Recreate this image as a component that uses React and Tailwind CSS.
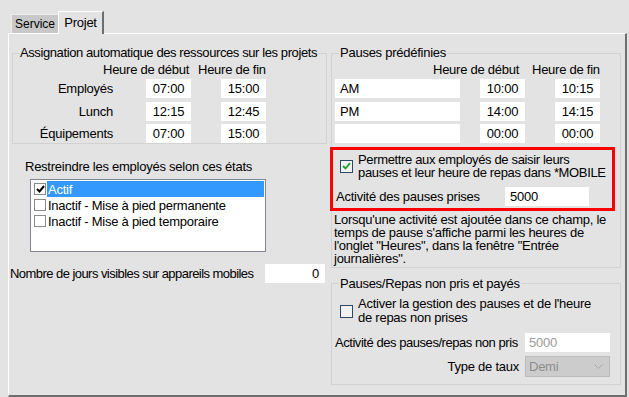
import React from 'react'

function TimeBox({ value, w = 'w-[45px]', className = '' }) {
  return (
    <div className={`${w} h-[19px] bg-white flex items-center justify-center ${className}`}>{value}</div>
  )
}

function Check({ on, className = '' }) {
  return (
    <div className={`w-[12px] h-[12px] border border-[#8a8a8a] bg-white flex items-center justify-center shrink-0 ${className}`}>
      {on && (
        <svg width="9" height="8" viewBox="0 0 9 8">
          <path d="M1 4 L3.5 6.5 L8 1" stroke="#000" strokeWidth="2" fill="none" />
        </svg>
      )}
    </div>
  )
}

function WinCheck({ on }) {
  return (
    <div className="w-[13px] h-[13px] border border-[#2b4866] bg-[#f2f2f2] flex items-center justify-center shrink-0">
      {on && (
        <svg width="9" height="8" viewBox="0 0 9 8">
          <path d="M1 4 L3.5 6.5 L8 1.2" stroke="#1f9d2b" strokeWidth="1.8" fill="none" />
        </svg>
      )}
    </div>
  )
}

export default function App(){
  const states = [
    { label: 'Actif', on: true },
    { label: 'Inactif - Mise à pied permanente', on: false },
    { label: 'Inactif - Mise à pied temporaire', on: false },
  ]

  return (
    <div className="w-[629px] h-[397px] bg-[#e3e3e3] overflow-hidden text-[13px] leading-[15px] tracking-[-0.25px] whitespace-nowrap text-black font-['Liberation_Sans',Arial,sans-serif]">
      {/* tabs */}
      <div className="h-[33px] flex items-end pl-[11px]">
        <div className="w-[47px] h-[19px] bg-[#c8c8c8] border-l border-t border-[#ededed] flex items-center justify-center text-[12px] tracking-normal">Service</div>
        <div className="relative z-10 w-[46px] h-[23px] -mb-[1px] bg-[#e3e3e3] border-l border-t border-white border-r-2 border-r-[#6e6e6e] flex items-center justify-center pb-[2px]">Projet</div>
      </div>

      {/* panel */}
      <div className="ml-[8px] w-[619px] h-[364px] border-l border-t border-white border-r-2 border-b-2 border-r-[#6e6e6e] border-b-[#6e6e6e] flex">
        {/* left column */}
        <div className="w-[322px] flex flex-col">
          <fieldset className="mt-[12px] ml-[3px] w-[315px] border border-[#d2d2d2]">
            <legend className="ml-[6px] px-[1px] leading-[14px] tracking-[-0.4px]">Assignation automatique des ressources sur les projets</legend>
            <div className="flex mt-[2px] pl-[90px]">
              <span className="w-[95px]">Heure de début</span>
              <span>Heure de fin</span>
            </div>
            {[
              ['Employés', '07:00', '15:00', 'mt-[2px]'],
              ['Lunch', '12:15', '12:45', 'mt-[4px]'],
              ['Équipements', '07:00', '15:00', 'mt-[3px]'],
            ].map(([label, a, b, mt]) => (
              <div key={label} className={`flex items-center ${mt}`}>
                <span className="w-[100px] text-right">{label}</span>
                <TimeBox value={a} className="ml-[33px]" />
                <TimeBox value={b} className="ml-[30px]" />
              </div>
            ))}
          </fieldset>

          <div className="mt-[15px] ml-[16px]">Restreindre les employés selon ces états</div>
          <div className="mt-[5px] ml-[21px] w-[236px] h-[73px] border border-[#828790] bg-white pt-[1px] pl-[3px] pr-[1px]">
            {states.map(s => (
              <div key={s.label} className="flex items-center h-[16px]">
                <Check on={s.on} />
                <div className={`ml-[1px] flex-1 h-[16px] flex items-center pl-[1px] ${s.on ? 'bg-[#3399ff] text-white' : ''}`}>{s.label}</div>
              </div>
            ))}
          </div>

          <div className="mt-[12px] ml-[1px] flex items-center">
            <span className="w-[255px] tracking-[-0.55px]">Nombre de jours visibles sur appareils mobiles</span>
            <div className="w-[60px] h-[19px] bg-white flex items-center justify-end pr-[6px]">0</div>
          </div>
        </div>

        {/* right column */}
        <div className="w-[290px] flex flex-col">
          <fieldset className="mt-[12px] w-[290px] border border-[#d2d2d2] pb-[2px]">
            <legend className="ml-[7px] px-[1px] leading-[14px]">Pauses prédéfinies</legend>
            <div className="flex mt-[2px] pl-[101px]">
              <span className="w-[99px]">Heure de début</span>
              <span>Heure de fin</span>
            </div>
            {[
              ['AM', '10:00', '10:15', 'mt-[2px]'],
              ['PM', '14:00', '14:15', 'mt-[4px]'],
              ['', '00:00', '00:00', 'mt-[3px]'],
            ].map(([name, a, b, mt], i) => (
              <div key={i} className={`flex items-center ${mt}`}>
                <div className="ml-[3px] w-[125px] h-[19px] bg-white flex items-center pl-[5px]">{name}</div>
                <TimeBox value={a} className="ml-[20px]" />
                <TimeBox value={b} className="ml-[30px]" />
              </div>
            ))}

            <div className="mt-[4px] -ml-[2px] w-[285px] h-[64px] border-[3px] border-[#ff0000] pt-[3px]">
              <div className="flex items-center">
                <div className="ml-[7px]"><WinCheck on /></div>
                <div className="ml-[5px] leading-[13px] tracking-[-0.35px]">Permettre aux employés de saisir leurs<br />pauses et leur heure de repas dans *MOBILE</div>
              </div>
              <div className="mt-[8px] flex items-center">
                <span className="ml-[3px] w-[169px]">Activité des pauses prises</span>
                <div className="w-[84px] h-[19px] bg-white flex items-center pl-[5px]">5000</div>
              </div>
            </div>

            <div className="mt-[2px] ml-[2px] leading-[13px]">
              Lorsqu'une activité est ajoutée dans ce champ, le<br />
              temps de pause s'affiche parmi les heures de<br />
              l'onglet "Heures", dans la fenêtre "Entrée<br />
              journalières".
            </div>
          </fieldset>

          <fieldset className="mt-[9px] w-[290px] h-[108px] border border-[#d2d2d2]">
            <legend className="ml-[7px] px-[1px] leading-[13px]">Pauses/Repas non pris et payés</legend>
            <div className="mt-[7px] flex items-center">
              <div className="ml-[8px]"><WinCheck /></div>
              <div className="ml-[5px] leading-[14px]">Activer la gestion des pauses et de l'heure<br />de repas non prises</div>
            </div>
            <div className="mt-[8px] flex items-center">
              <span className="ml-[3px] w-[190px] tracking-[-0.45px]">Activité des pauses/repas non pris</span>
              <div className="w-[85px] h-[19px] bg-white flex items-center pl-[4px] text-[#9a9a9a]">5000</div>
            </div>
            <div className="mt-[4px] flex items-center justify-end pr-[10px]">
              <span className="mr-[6px]">Type de taux</span>
              <div className="w-[85px] h-[21px] bg-[#cccccc] border border-[#bcbcbc] flex items-center justify-between pl-[3px] pr-[6px] text-[#8c8c8c]">
                <span>Demi</span>
                <svg width="9" height="6" viewBox="0 0 9 6">
                  <path d="M0.5 0.5 L4.5 4.5 L8.5 0.5" stroke="#a8a8a8" strokeWidth="1" fill="none" />
                </svg>
              </div>
            </div>
          </fieldset>
        </div>
      </div>
    </div>
  )
}
